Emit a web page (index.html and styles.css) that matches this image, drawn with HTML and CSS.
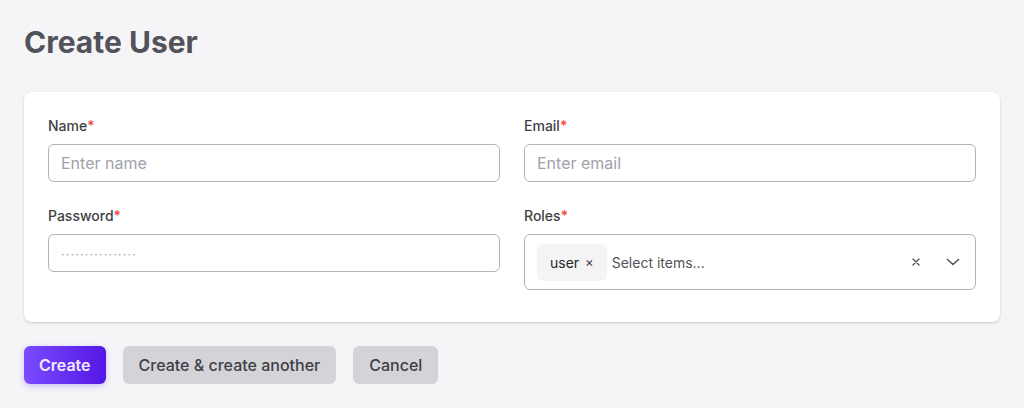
FILE: index.html
```html
<!DOCTYPE html>
<html>
<head>
<meta charset="utf-8">
<link rel="stylesheet" href="styles.css">
</head>
<body>
<div class="page">
  <h1 class="title">Create User</h1>
  <div class="card">
    <div class="grid">
      <div class="field">
        <label class="label">Name<span class="req">*</span></label>
        <input class="input" type="text" placeholder="Enter name">
      </div>
      <div class="field">
        <label class="label">Email<span class="req">*</span></label>
        <input class="input" type="text" placeholder="Enter email">
      </div>
      <div class="field">
        <label class="label">Password<span class="req">*</span></label>
        <input class="input pw" type="text" placeholder="················">
      </div>
      <div class="field">
        <label class="label">Roles<span class="req">*</span></label>
        <div class="multi">
          <span class="tag">user <span class="tag-x">×</span></span>
          <span class="ms-placeholder">Select items...</span>
          <span class="clear">
            <svg width="10" height="10" viewBox="0 0 10 10"><path d="M2 2L8 8M8 2L2 8" stroke="#52525b" stroke-width="1.3" stroke-linecap="round"/></svg>
          </span>
          <span class="chev">
            <svg width="14" height="8" viewBox="0 0 14 8"><path d="M1.5 1.5L7 6.5L12.5 1.5" fill="none" stroke="#52525b" stroke-width="1.6" stroke-linecap="round" stroke-linejoin="round"/></svg>
          </span>
        </div>
      </div>
    </div>
  </div>
  <div class="actions">
    <button class="btn primary">Create</button>
    <button class="btn gray">Create &amp; create another</button>
    <button class="btn gray">Cancel</button>
  </div>
</div>
</body>
</html>
```
FILE: styles.css
```css
* { box-sizing: border-box; }
html, body { margin: 0; padding: 0; }
body {
  background: #f5f5f7;
  font-family: Inter, "Noto Sans", sans-serif;
  color: #3f3f46;
}
.page { padding: 24px; }
.title {
  margin: 0;
  font-size: 30px;
  line-height: 36px;
  font-weight: 700;
  color: #52525b;
}
.card {
  margin-top: 32px;
  background: #fff;
  border-radius: 8px;
  box-shadow: 0 1px 3px rgba(0,0,0,0.12), 0 1px 2px rgba(0,0,0,0.06);
  padding: 24px 24px 32px;
}
.grid {
  display: grid;
  grid-template-columns: 1fr 1fr;
  column-gap: 24px;
  row-gap: 24px;
}
.field { display: flex; flex-direction: column; }
.label {
  font-size: 14px;
  font-weight: 500;
  line-height: 20px;
  color: #3f3f46;
  margin-bottom: 8px;
}
.req { color: #ef4444; }
.input {
  height: 38px;
  border: 1px solid #b4b4bb;
  border-radius: 6px;
  padding: 0 12px;
  font-family: inherit;
  font-size: 16px;
  color: #27272a;
  background: #fff;
  outline: none;
}
.input::placeholder { color: #a1a1aa; }
.input.pw::placeholder { font-size: 12px; letter-spacing: 1.3px; color: #a1a1aa; }
.multi {
  height: 56px;
  border: 1px solid #b4b4bb;
  border-radius: 6px;
  display: flex;
  align-items: center;
  padding: 0 12px;
}
.tag {
  background: #f4f4f5;
  border-radius: 6px;
  height: 37px;
  padding: 0 13px;
  display: flex;
  align-items: center;
  font-size: 14px;
  color: #27272a;
  gap: 6px;
}
.tag-x { font-size: 13px; color: #3f3f46; }
.ms-placeholder {
  margin-left: 5px;
  font-size: 14px;
  color: #52525b;
  flex: 1;
}
.clear { display: flex; align-items: center; margin-right: 25px; }
.chev { display: flex; align-items: center; margin-right: 3px; }
.actions {
  margin-top: 24px;
  display: flex;
  gap: 17px;
}
.btn {
  height: 38px;
  border: none;
  border-radius: 6px;
  font-family: inherit;
  font-size: 16px;
  font-weight: 500;
  padding: 0 16px;
  cursor: pointer;
}
.btn.primary {
  background: linear-gradient(90deg, #7a4bff 0%, #5417e6 100%);
  color: #f1ecff;
  font-weight: 600;
  padding: 0 15px;
  box-shadow: 0 2px 6px rgba(110, 60, 250, 0.3);
}
.btn.gray {
  background: #d4d4d8;
  color: #3f3f46;
  padding: 0 16px;
}
```
